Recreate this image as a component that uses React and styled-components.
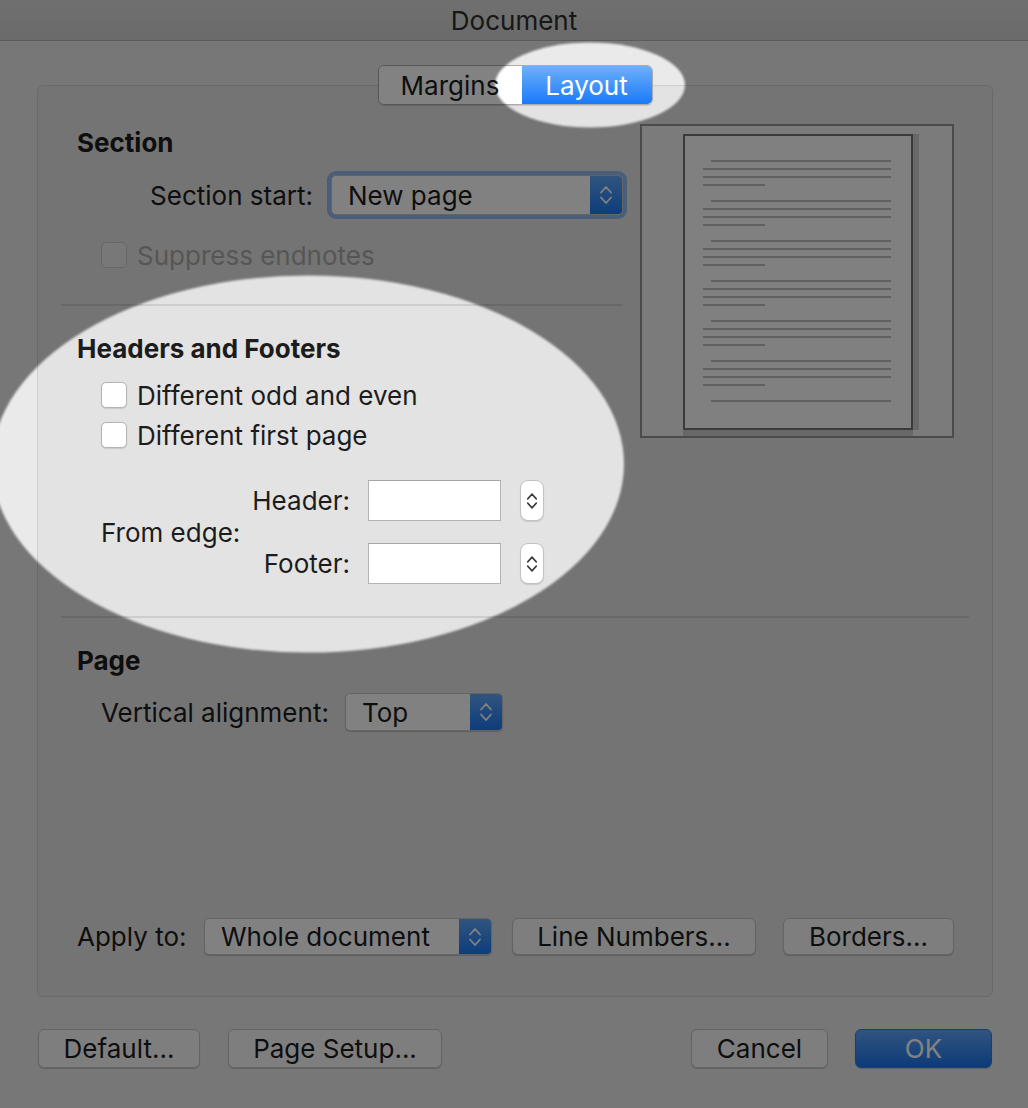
import React from "react";
import styled, { createGlobalStyle } from "styled-components";

const GlobalStyle = createGlobalStyle`
  html, body {
    margin: 0;
    padding: 0;
  }
  body {
    background: #eaeaea;
    font-family: Inter, "Liberation Sans", sans-serif;
    color: #1c1c1c;
  }
`;

const Stage = styled.div`
  position: relative;
  width: 1028px;
  height: 1108px;
  overflow: hidden;
  background: #eaeaea;
  display: flex;
  flex-direction: column;
`;

const TitleBar = styled.div`
  flex: none;
  height: 40px;
  display: flex;
  align-items: center;
  justify-content: center;
  background: linear-gradient(#dbdbdb, #d1d1d1);
  border-bottom: 1px solid #b3b3b3;
  font-size: 26px;
  color: #2e2e2e;
`;

const Body = styled.div`
  flex: 1;
  display: flex;
  flex-direction: column;
  padding: 24px 35px 0 37px;
`;

const Tabs = styled.div`
  position: relative;
  z-index: 1;
  align-self: center;
  display: flex;
  height: 40px;
  margin-bottom: -20px;
  border: 1px solid #ababab;
  border-radius: 6px;
  overflow: hidden;
  box-sizing: border-box;
  box-shadow: 0 1px 1px rgba(0, 0, 0, 0.12);
`;

const Tab = styled.div`
  width: ${(p) => p.$width}px;
  display: flex;
  align-items: center;
  justify-content: center;
  font-size: 26px;
  background: ${(p) =>
    p.$active ? "linear-gradient(#6cb1fa, #1a79fa)" : "#ffffff"};
  color: ${(p) => (p.$active ? "#ffffff" : "#1c1c1c")};
`;

const Panel = styled.div`
  height: 912px;
  box-sizing: border-box;
  display: flex;
  flex-direction: column;
  padding: 0 23px 41px;
  background: #e3e3e3;
  border: 1px solid #cfcfcf;
  border-radius: 6px;
`;

const TopGrid = styled.div`
  display: grid;
  grid-template-columns: 562px 314px;
  column-gap: 17px;
  margin-top: 38px;
  align-items: start;
`;

const Column = styled.div`
  display: flex;
  flex-direction: column;
`;

const Heading = styled.div`
  height: 30px;
  line-height: 30px;
  margin-top: ${(p) => p.$top}px;
  padding-left: 16px;
  font-size: 26px;
  font-weight: 700;
`;

const Row = styled.div`
  display: flex;
  align-items: center;
  height: ${(p) => p.$height}px;
  margin-top: ${(p) => p.$top}px;
  padding-left: ${(p) => p.$indent || 0}px;
  font-size: 26px;
`;

const Label = styled.div`
  flex: none;
  width: ${(p) => p.$width}px;
  text-align: ${(p) => p.$align || "left"};
  white-space: nowrap;
`;

const Separator = styled.div`
  height: 2px;
  margin-top: ${(p) => p.$top}px;
  background: #cdcdcd;
`;

const Popup = styled.div`
  flex: none;
  display: flex;
  width: ${(p) => p.$width}px;
  height: ${(p) => p.$height}px;
  margin-left: ${(p) => p.$left || 0}px;
  box-sizing: border-box;
  border-radius: 5px;
  background: #fdfdfd;
  border: 1px solid #c4c4c4;
  box-shadow: ${(p) =>
    p.$focused
      ? "0 0 0 4px #8db8ee"
      : "0 1px 1px rgba(0, 0, 0, 0.18)"};
  overflow: hidden;
`;

const PopupValue = styled.div`
  flex: 1;
  display: flex;
  align-items: center;
  padding-left: 16px;
  white-space: nowrap;
`;

const PopupArrow = styled.div`
  flex: none;
  width: 32px;
  display: flex;
  align-items: center;
  justify-content: center;
  background: linear-gradient(#5fa6f8, #1b78f2);
`;

const Button = styled.div`
  flex: none;
  width: ${(p) => p.$width}px;
  height: ${(p) => p.$height}px;
  margin-left: ${(p) => p.$left || 0}px;
  box-sizing: border-box;
  display: flex;
  align-items: center;
  justify-content: center;
  border-radius: 6px;
  font-size: 26px;
  background: ${(p) =>
    p.$primary ? "linear-gradient(#5ea6f8, #1a73ec)" : "#f8f8f8"};
  color: ${(p) => (p.$primary ? "#ffffff" : "#1c1c1c")};
  border: 1px solid ${(p) => (p.$primary ? "#2d7de4" : "#c4c4c4")};
  box-shadow: 0 1px 1px rgba(0, 0, 0, 0.18);
`;

const Checkbox = styled.div`
  flex: none;
  width: 26px;
  height: 26px;
  box-sizing: border-box;
  border-radius: 5px;
  background: ${(p) => (p.$disabled ? "#ebebeb" : "#ffffff")};
  border: 1px solid ${(p) => (p.$disabled ? "#cbcbcb" : "#b3b3b3")};
  box-shadow: ${(p) => (p.$disabled ? "none" : "0 1px 1px rgba(0,0,0,0.12)")};
`;

const CheckText = styled.span`
  margin-left: 10px;
  color: ${(p) => (p.$disabled ? "#aaaaaa" : "#1c1c1c")};
`;

const FromEdge = styled.div`
  display: flex;
  align-items: center;
  margin-top: 30px;
  padding-left: 40px;
  font-size: 26px;
`;

const Fields = styled.div`
  display: flex;
  flex-direction: column;
  gap: 22px;
`;

const FieldRow = styled.div`
  display: flex;
  align-items: center;
  height: 41px;
`;

const Field = styled.div`
  width: 133px;
  height: 41px;
  margin-left: 18px;
  box-sizing: border-box;
  background: #ffffff;
  border: 1px solid #b4b4b4;
  border-top-color: #a6a6a6;
`;

const Stepper = styled.div`
  width: 24px;
  height: 41px;
  margin-left: 19px;
  box-sizing: border-box;
  display: flex;
  align-items: center;
  justify-content: center;
  background: #ffffff;
  border: 1px solid #c2c2c2;
  border-radius: 8px;
  box-shadow: 0 1px 1px rgba(0, 0, 0, 0.12);
`;

const PreviewFrame = styled.div`
  width: 314px;
  height: 314px;
  box-sizing: border-box;
  padding: 8px 0 0 41px;
  background: #f1f1f1;
  border: 2px solid #939393;
`;

const Spacer = styled.div`
  flex: 1;
`;

const Footer = styled.div`
  display: flex;
  align-items: center;
  margin-top: 32px;
  padding: 0 1px;
`;

const Overlay = styled.svg`
  position: absolute;
  top: 0;
  left: 0;
  z-index: 10;
  pointer-events: none;
`;

const Chevrons = ({ color = "#ffffff", width = 14, height = 22 }) => (
  <svg
    width={width}
    height={height}
    viewBox="0 0 14 22"
    fill="none"
    stroke={color}
    strokeWidth="1.8"
    strokeLinecap="round"
    strokeLinejoin="round"
  >
    <path d="M2 8.5 L7 3 L12 8.5" />
    <path d="M2 13.5 L7 19 L12 13.5" />
  </svg>
);

const PagePreview = () => {
  const groups = [0, 1, 2, 3, 4, 5];
  const line = "#bcbcbc";
  return (
    <svg width="236" height="302" viewBox="0 0 236 302">
      <rect x="230" y="0" width="6" height="296" fill="#cdcdcd" />
      <rect x="0" y="296" width="230" height="6" fill="#cdcdcd" />
      <rect
        x="1"
        y="1"
        width="228"
        height="294"
        fill="#fbfbfb"
        stroke="#747474"
        strokeWidth="2"
      />
      {groups.map((g) => {
        const y = 26 + g * 40;
        return (
          <g key={g} fill={line}>
            <rect x="28" y={y} width="180" height="2" />
            <rect x="20" y={y + 8} width="188" height="2" />
            <rect x="20" y={y + 16} width="188" height="2" />
            <rect x="20" y={y + 24} width="62" height="2" />
          </g>
        );
      })}
      <rect x="28" y="266" width="180" height="2" fill={line} />
    </svg>
  );
};

const Spotlight = () => (
  <Overlay width="1028" height="1108" viewBox="0 0 1028 1108">
    <defs>
      <filter id="soft" x="-5%" y="-5%" width="110%" height="110%">
        <feGaussianBlur stdDeviation="0.8" />
      </filter>
      <mask id="spots">
        <rect width="1028" height="1108" fill="white" />
        <g filter="url(#soft)" fill="black">
          <ellipse cx="590" cy="85" rx="95" ry="42.5" />
          <ellipse cx="308" cy="464" rx="316" ry="188.5" />
        </g>
      </mask>
    </defs>
    <rect
      width="1028"
      height="1108"
      fill="rgba(0,0,0,0.49)"
      mask="url(#spots)"
    />
  </Overlay>
);

const App = () => (
  <Stage>
    <GlobalStyle />
    <TitleBar>Document</TitleBar>
    <Body>
      <Tabs>
        <Tab $width={143}>Margins</Tab>
        <Tab $width={130} $active>
          Layout
        </Tab>
      </Tabs>
      <Panel>
        <TopGrid>
          <Column>
            <Heading $top={4}>Section</Heading>
            <Row $height={50} $top={12}>
              <Label $width={252} $align="right">
                Section start:
              </Label>
              <Popup $width={292} $height={40} $left={18} $focused>
                <PopupValue>New page</PopupValue>
                <PopupArrow>
                  <Chevrons />
                </PopupArrow>
              </Popup>
            </Row>
            <Row $height={30} $top={20} $indent={40}>
              <Checkbox $disabled />
              <CheckText $disabled>Suppress endnotes</CheckText>
            </Row>
            <Separator $top={34} />
            <Heading $top={28}>Headers and Footers</Heading>
            <Row $height={30} $top={16} $indent={40}>
              <Checkbox />
              <CheckText>Different odd and even</CheckText>
            </Row>
            <Row $height={30} $top={10} $indent={40}>
              <Checkbox />
              <CheckText>Different first page</CheckText>
            </Row>
            <FromEdge>
              <Label $width={149}>From edge:</Label>
              <Fields>
                <FieldRow>
                  <Label $width={100} $align="right">
                    Header:
                  </Label>
                  <Field />
                  <Stepper>
                    <Chevrons color="#3a3a3a" width={12} height={22} />
                  </Stepper>
                </FieldRow>
                <FieldRow>
                  <Label $width={100} $align="right">
                    Footer:
                  </Label>
                  <Field />
                  <Stepper>
                    <Chevrons color="#3a3a3a" width={12} height={22} />
                  </Stepper>
                </FieldRow>
              </Fields>
            </FromEdge>
          </Column>
          <PreviewFrame>
            <PagePreview />
          </PreviewFrame>
        </TopGrid>
        <Separator $top={32} />
        <Heading $top={28}>Page</Heading>
        <Row $height={44} $top={14} $indent={40}>
          <Label $width={244}>Vertical alignment:</Label>
          <Popup $width={158} $height={38}>
            <PopupValue>Top</PopupValue>
            <PopupArrow>
              <Chevrons />
            </PopupArrow>
          </Popup>
        </Row>
        <Spacer />
        <Row $height={37} $top={0} $indent={16}>
          <Label $width={127}>Apply to:</Label>
          <Popup $width={288} $height={37}>
            <PopupValue>Whole document</PopupValue>
            <PopupArrow>
              <Chevrons />
            </PopupArrow>
          </Popup>
          <Button $width={244} $height={37} $left={20}>
            Line Numbers...
          </Button>
          <Button $width={171} $height={37} $left={27}>
            Borders...
          </Button>
        </Row>
      </Panel>
      <Footer>
        <Button $width={162} $height={39}>
          Default...
        </Button>
        <Button $width={214} $height={39} $left={28}>
          Page Setup...
        </Button>
        <Spacer />
        <Button $width={137} $height={39}>
          Cancel
        </Button>
        <Button $width={137} $height={39} $left={27} $primary>
          OK
        </Button>
      </Footer>
    </Body>
    <Spotlight />
  </Stage>
);

export default App;
